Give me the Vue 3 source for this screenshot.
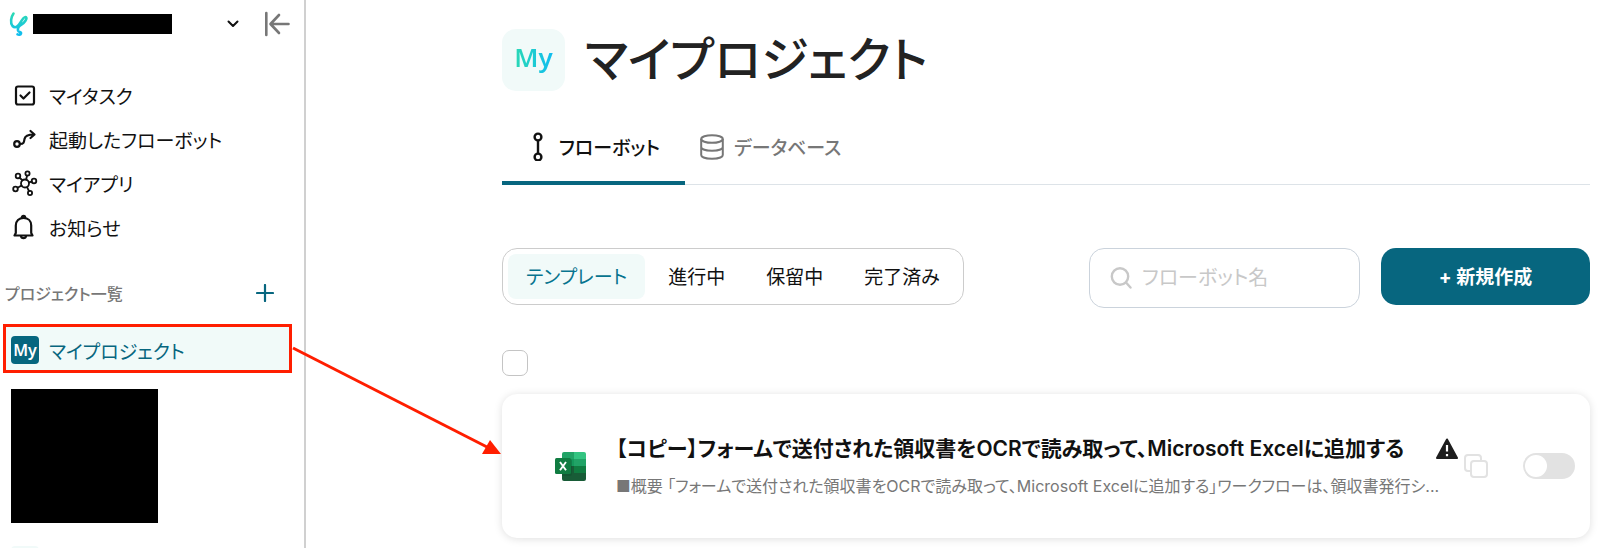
<script setup>
import { ref } from "vue";

const menus = [
  { key: "task", label: "マイタスク" },
  { key: "launched", label: "起動したフローボット" },
  { key: "apps", label: "マイアプリ" },
  { key: "news", label: "お知らせ" },
];

const filters = ["テンプレート", "進行中", "保留中", "完了済み"];

const activeTab = ref("flow");
const activeFilter = ref("テンプレート");
const keyword = ref("");
const allChecked = ref(false);

const flows = ref([
  {
    id: 1,
    title:
      "【コピー】フォームで送付された領収書をOCRで読み取って、Microsoft Excelに追加する",
    description:
      "■概要 「フォームで送付された領収書をOCRで読み取って、Microsoft Excelに追加する」ワークフローは、領収書発行シ...",
    enabled: false,
  },
]);
</script>

<template>
  <div class="app">
    <aside class="sidebar">
      <div class="workspace">
        <svg class="logo" width="20" height="26" viewBox="0 0 20 26" fill="none">
          <defs>
            <linearGradient id="logoGradient" x1="0" y1="0" x2="0" y2="1">
              <stop offset="0" stop-color="#2bd9b4" />
              <stop offset="1" stop-color="#10bdf0" />
            </linearGradient>
          </defs>
          <path
            d="M4.500 2.500C2 6 1 12 3.500 15C6.500 18 9.500 15 11.500 11.500C13.500 8 15.500 5.500 17 6.200C18.500 7.500 15.500 12 12.500 13.500C9.500 15 8.500 17 9 19.500C9.500 21.500 12.500 20.500 12 22.500C11.500 24 9.500 23.800 8.500 23.400"
            stroke="url(#logoGradient)"
            stroke-width="2.600"
            stroke-linecap="round"
            stroke-linejoin="round"
          />
        </svg>
        <div class="workspace-name"></div>
        <button class="icon-button switcher" aria-label="ワークスペース切り替え">
          <svg width="12" height="8" viewBox="0 0 12 8" fill="none" stroke="#111" stroke-width="2" stroke-linecap="round" stroke-linejoin="round">
            <path d="M1.500 1.500L6 6L10.500 1.500" />
          </svg>
        </button>
        <button class="icon-button" aria-label="サイドバーを閉じる">
          <svg width="26" height="26" viewBox="0 0 26 26" fill="none" stroke="#777" stroke-width="2.600" stroke-linecap="round" stroke-linejoin="round">
            <path d="M2.300 2V24M24.500 13H7M15 4L6.500 13L15 22" />
          </svg>
        </button>
      </div>

      <nav class="menu">
        <a v-for="item in menus" :key="item.key" class="menu-item" href="#">
          <svg width="26" height="26" viewBox="0 0 26 26" fill="none" stroke="#111" stroke-width="2.200" stroke-linecap="round" stroke-linejoin="round">
            <template v-if="item.key === 'task'">
              <rect x="4" y="4.500" width="18" height="18" rx="2" />
              <path d="M8.500 13.500L11.500 16.500L17.500 10.500" />
            </template>
            <template v-else-if="item.key === 'launched'">
              <circle cx="5" cy="18" r="2.800" />
              <path d="M8 18C12 18 12 16 12.500 13C13 10 15 8.500 22 8.500M18.500 5L22.500 8.500L18.500 12" />
            </template>
            <template v-else-if="item.key === 'apps'">
              <g stroke-width="1.800">
                <circle cx="13" cy="13.500" r="4" />
                <circle cx="6" cy="6" r="2.300" />
                <circle cx="15.500" cy="3.500" r="2.100" />
                <circle cx="22" cy="11" r="2.300" />
                <circle cx="18" cy="23" r="2.100" />
                <circle cx="3.500" cy="19" r="2.300" />
                <path d="M10.500 10.300L7.500 7.700M14.200 9.500L15 5.700M17 12.300L19.700 11.600M15 17.200L17 21M9.600 15.500L5.600 17.800" />
              </g>
            </template>
            <template v-else>
              <path d="M2.500 21.500H20.500L19.200 19V11.500C19.200 7 16 4 11.500 4S3.800 7 3.800 11.500V19Z" />
              <path d="M9.800 3.700C9.800 1.200 13.200 1.200 13.200 3.700M9 22.200C9.300 24.800 13.700 24.800 14 22.200" />
            </template>
          </svg>
          <span>{{ item.label }}</span>
        </a>
      </nav>

      <div class="section">
        <span>プロジェクト一覧</span>
        <button class="icon-button" aria-label="プロジェクトを追加">
          <svg width="18" height="18" viewBox="0 0 18 18" stroke="#07667f" stroke-width="2.200" stroke-linecap="round">
            <path d="M9 1V17M1 9H17" />
          </svg>
        </button>
      </div>

      <a class="project" href="#">
        <span class="project-icon">My</span>
        <span>マイプロジェクト</span>
      </a>
      <div class="project-mask"></div>
      <div class="project-next"></div>
    </aside>

    <main class="main">
      <header class="header">
        <div class="header-icon"><span>My</span></div>
        <h1>マイプロジェクト</h1>
      </header>

      <div class="tabs">
        <button class="tab" :class="{ active: activeTab === 'flow' }" @click="activeTab = 'flow'">
          <svg width="10" height="30" viewBox="0 0 10 30" fill="none" stroke="currentColor" stroke-width="2.400">
            <circle cx="5" cy="6" r="3.400" />
            <circle cx="5" cy="26" r="3.400" />
            <path d="M5 9.400V22.600" />
          </svg>
          フローボット
        </button>
        <button class="tab" :class="{ active: activeTab === 'db' }" @click="activeTab = 'db'">
          <svg width="24" height="28" viewBox="0 0 24 28" fill="none" stroke="currentColor" stroke-width="2">
            <ellipse cx="12" cy="7" rx="10.800" ry="3.800" />
            <path d="M1.200 7V23C1.200 28 22.800 28 22.800 23V7M1.200 15C1.200 20 22.800 20 22.800 15" />
          </svg>
          データベース
        </button>
      </div>

      <div class="toolbar">
        <div class="filters">
          <button
            v-for="name in filters"
            :key="name"
            class="filter"
            :class="{ active: activeFilter === name }"
            @click="activeFilter = name"
          >
            {{ name }}
          </button>
        </div>
        <label class="search">
          <svg width="22" height="22" viewBox="0 0 22 22" fill="none" stroke="#c8c8c8" stroke-width="2.400" stroke-linecap="round">
            <circle cx="10" cy="9.500" r="8.200" />
            <path d="M16 15.500L20.500 20.500" />
          </svg>
          <input v-model="keyword" type="text" placeholder="フローボット名" aria-label="フローボット名" />
        </label>
        <button class="create">+ 新規作成</button>
      </div>

      <input v-model="allChecked" class="check-all" type="checkbox" aria-label="すべて選択" />

      <article v-for="flow in flows" :key="flow.id" class="card">
        <svg class="excel" width="31" height="29" viewBox="0 0 31 29">
          <path d="M9 0H19V14H7V2Q7 0 9 0Z" fill="#21a366" />
          <path d="M19 0H29Q31 0 31 2V7H19Z" fill="#33c481" />
          <path d="M7 7H19V14H7Z" fill="#159a5c" />
          <path d="M19 7H31V14H19Z" fill="#21a366" />
          <path d="M7 14H31V27Q31 29 29 29H9Q7 29 7 27Z" fill="#185c37" />
          <path d="M19 14H31V21H19Z" fill="#107c41" />
          <path d="M7 7H15Q17 7 17 9V22Q17 24 15 24H7Z" fill="#0b4a2a" opacity="0.350" />
          <rect y="6" width="16" height="16" rx="1.500" fill="#107c41" />
          <path d="M5 10L11 18.200M11 10L5 18.200" stroke="#fff" stroke-width="1.900" />
        </svg>
        <div class="card-body">
          <h2 class="card-title">
            {{ flow.title }}
            <svg class="warning" width="22" height="22" viewBox="0 0 22 22">
              <path d="M11 1.500L21 20H1Z" fill="#1e1e1e" stroke="#1e1e1e" stroke-width="2" stroke-linejoin="round" />
              <path d="M11 7V13.500M11 16V18.200" stroke="#fff" stroke-width="2.200" />
            </svg>
          </h2>
          <p class="card-text">{{ flow.description }}</p>
        </div>
        <button class="icon-button copy" aria-label="コピー">
          <svg width="24" height="24" viewBox="0 0 24 24" fill="none" stroke="#e2e2e2" stroke-width="2" stroke-linejoin="round">
            <rect x="7" y="7" width="16" height="16" rx="3" />
            <path d="M7 17H4Q1 17 1 14V4Q1 1 4 1H14Q17 1 17 4V7" />
          </svg>
        </button>
        <input v-model="flow.enabled" class="switch" type="checkbox" role="switch" aria-label="有効" />
      </article>
    </main>

    <svg class="arrow" width="212" height="118" viewBox="0 0 212 118">
      <path d="M2 8L196 107" stroke="#ff1e00" stroke-width="3" />
      <path d="M210 114L191 114L199 100Z" fill="#ff1e00" />
    </svg>
  </div>
</template>

<style>
body {
  margin: 0;
  background: #fff;
}
</style>

<style scoped>
.app {
  position: relative;
  display: flex;
  height: 100vh;
  overflow: hidden;
  color: #111;
  font-family: Inter, "Noto Sans CJK JP", sans-serif;
  font-feature-settings: "palt";
}

.app *,
.app *::before {
  box-sizing: border-box;
}

button,
input {
  font: inherit;
  font-feature-settings: inherit;
  color: inherit;
}

button {
  padding: 0;
  border: none;
  background: none;
  cursor: pointer;
}

a {
  color: inherit;
  text-decoration: none;
}

svg {
  flex-shrink: 0;
}

.icon-button {
  display: flex;
  align-items: center;
  justify-content: center;
}

/* サイドバー */
.sidebar {
  flex: 0 0 306px;
  overflow: hidden;
  border-right: 2px solid #d0d0d0;
  font-size: 19px;
}

.workspace {
  display: flex;
  align-items: center;
  height: 48px;
  padding: 0 14px 0 9px;
}

.workspace-name {
  width: 139px;
  height: 20px;
  margin-left: 4px;
  background: #000;
}

.switcher {
  margin-left: auto;
  margin-right: 25px;
}

.menu {
  padding: 25px 12px 0;
}

.menu-item {
  display: flex;
  align-items: center;
  gap: 11px;
  height: 44px;
}

.section {
  display: flex;
  align-items: center;
  justify-content: space-between;
  height: 42px;
  margin-top: 23px;
  padding: 0 30px 0 5px;
  color: #777;
  font-size: 16px;
  font-weight: 500;
}

.project {
  display: flex;
  align-items: center;
  gap: 10px;
  height: 49px;
  margin: 10px 12px 0 3px;
  padding: 3px 0 0 5px;
  border: 3px solid #ff1e00;
  background: #f1faf9;
  color: #07667f;
}

.project-icon {
  display: flex;
  align-items: center;
  justify-content: center;
  width: 28px;
  height: 28px;
  border-radius: 4px;
  background: #07667f;
  color: #fff;
  font-family: "Noto Sans", sans-serif;
  font-size: 16px;
  font-weight: 600;
}

.project-mask {
  width: 147px;
  height: 134px;
  margin: 16px 0 0 11px;
  background: #000;
}

.project-next {
  width: 28px;
  height: 28px;
  margin: 23px 0 0 11px;
  border-radius: 4px;
  background: #f1faf9;
}

/* メイン */
.main {
  flex: 1;
  min-width: 0;
  padding: 29px 10px 0 196px;
}

.header {
  display: flex;
  align-items: center;
  gap: 20px;
}

.header-icon {
  display: flex;
  align-items: center;
  justify-content: center;
  width: 63px;
  height: 62px;
  padding-bottom: 6px;
  border-radius: 14px;
  background: #f1faf9;
  font-family: "Noto Sans", sans-serif;
  font-size: 26px;
  font-weight: 600;
}

.header-icon span {
  background: linear-gradient(90deg, #2bd9b4, #10bdf0);
  background-clip: text;
  color: transparent;
}

h1 {
  margin: 0;
  color: #222;
  font-size: 48px;
  font-weight: 500;
  line-height: 60px;
}

.tabs {
  display: flex;
  height: 76px;
  margin-top: 18px;
  border-bottom: 1px solid #dde3e8;
}

.tab {
  display: flex;
  align-items: center;
  gap: 16px;
  height: 76px;
  padding: 2px 25px 0 31px;
  border-bottom: 4px solid transparent;
  color: #777;
  font-size: 19px;
  font-weight: 500;
}

.tab + .tab {
  gap: 10px;
  padding-left: 15px;
}

.tab.active {
  border-bottom-color: #07667f;
  border-radius: 3px 3px 0 0;
  color: #111;
}

.toolbar {
  display: flex;
  align-items: flex-start;
  margin-top: 63px;
}

.filters {
  display: flex;
  gap: 5px;
  padding: 5px;
  border: 1px solid #ccc;
  border-radius: 15px;
}

.filter {
  height: 45px;
  padding: 0 18px 2px;
  border-radius: 8px;
  font-size: 19px;
}

.filter.active {
  background: #f1faf9;
  color: #07748f;
}

.search {
  display: flex;
  align-items: center;
  gap: 10px;
  width: 271px;
  height: 60px;
  margin-left: auto;
  padding: 0 20px;
  border: 1px solid #cbd3dc;
  border-radius: 15px;
}

.search input {
  flex: 1;
  min-width: 0;
  padding: 0;
  border: none;
  outline: none;
  background: none;
  font-size: 20px;
}

.search input::placeholder {
  color: #c8c8c8;
}

.create {
  width: 209px;
  height: 57px;
  margin-left: 21px;
  padding-bottom: 2px;
  border-radius: 15px;
  background: #07667f;
  color: #fff;
  font-size: 19px;
  font-weight: 700;
}

.check-all {
  display: block;
  width: 26px;
  height: 26px;
  margin: 42px 0 0;
  appearance: none;
  border: 1px solid #c4c4c4;
  border-radius: 7px;
}

.check-all:checked {
  background: #07667f;
}

.card {
  display: flex;
  align-items: center;
  height: 144px;
  margin-top: 18px;
  padding: 0 15px 0 53px;
  border-radius: 15px;
  box-shadow: 0 1px 8px rgba(0, 0, 0, 0.13);
}

.card-body {
  flex: 1;
  min-width: 0;
  margin-left: 30px;
  padding-top: 2px;
}

.card-title {
  display: flex;
  align-items: center;
  justify-content: space-between;
  margin: 0;
  font-size: 21px;
  font-weight: 600;
  line-height: 38px;
  white-space: nowrap;
}

.card-text {
  margin: 0;
  overflow: hidden;
  color: #777;
  font-size: 16px;
  line-height: 36px;
  text-overflow: ellipsis;
  white-space: nowrap;
}

.copy {
  margin: 0 35px 0 6px;
}

.switch {
  display: flex;
  align-items: center;
  width: 52px;
  height: 26px;
  margin: 0;
  padding: 0 2px;
  appearance: none;
  border-radius: 13px;
  background: #e2e2e2;
}

.switch::before {
  width: 22px;
  height: 22px;
  border-radius: 50%;
  background: #fff;
  content: "";
}

.switch:checked {
  justify-content: flex-end;
  background: #07667f;
}

/* 選択中プロジェクトから一覧への案内矢印 */
.arrow {
  position: absolute;
  top: 340px;
  left: 291px;
  pointer-events: none;
}
</style>
